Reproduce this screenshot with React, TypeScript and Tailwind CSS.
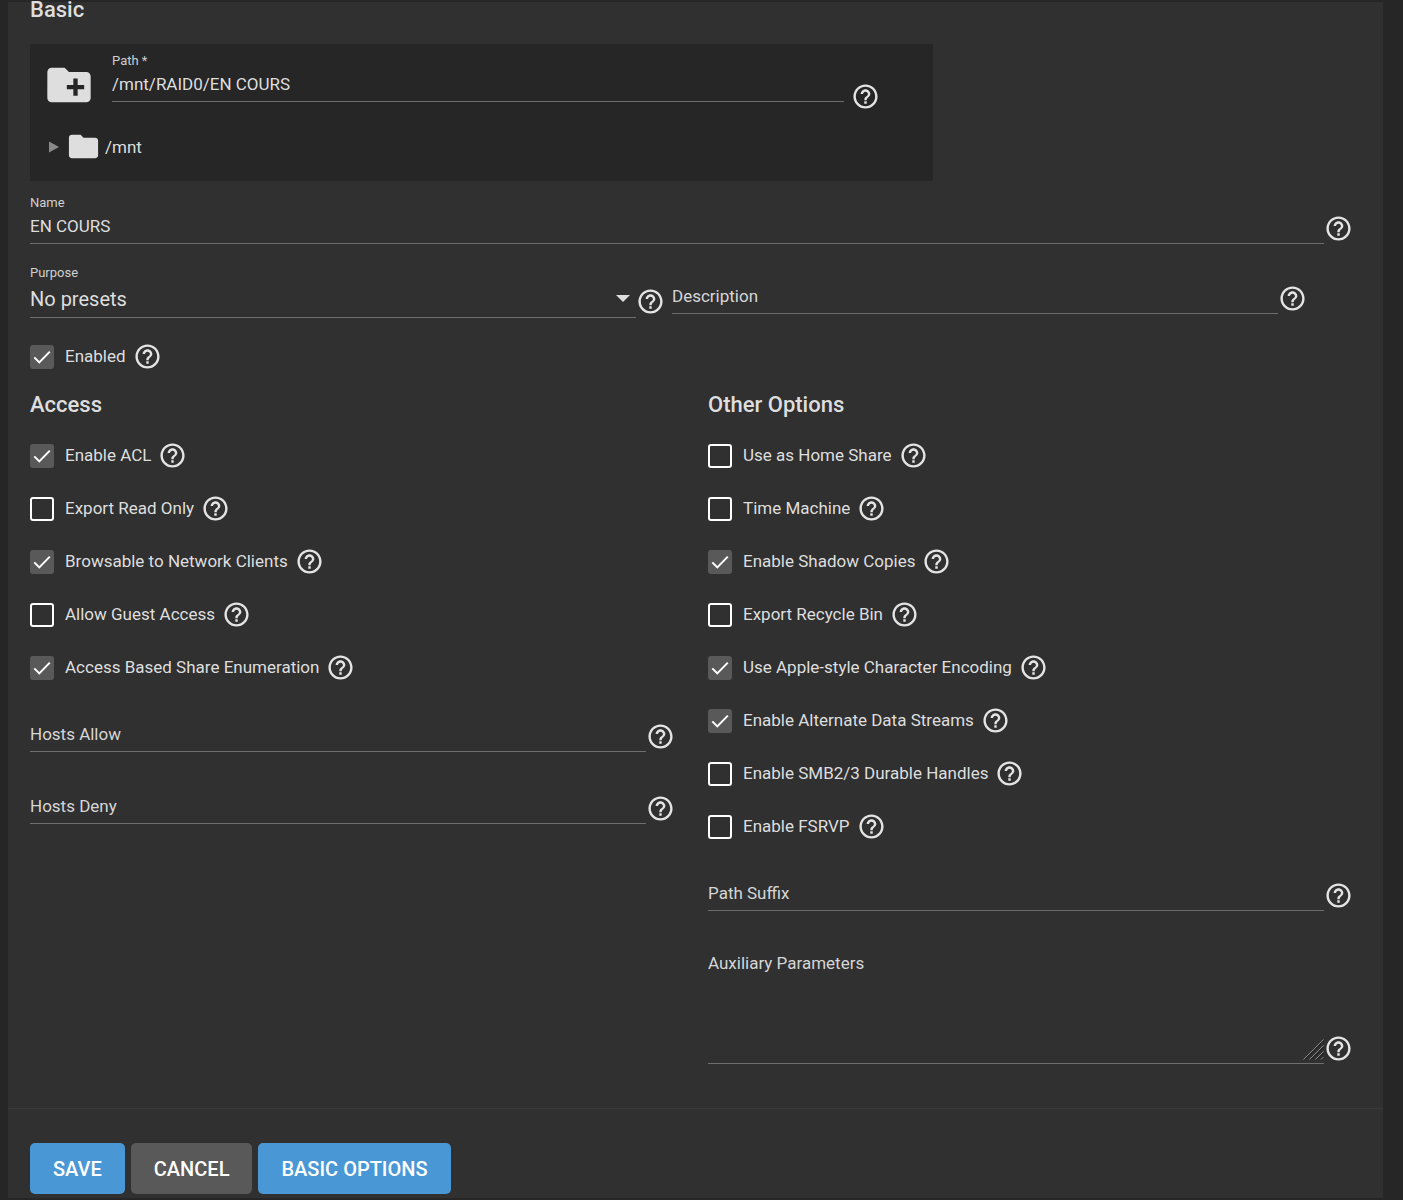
import { useState } from 'react'
import type { ReactNode } from 'react'
import { MdCreateNewFolder, MdFolder, MdHelpOutline } from 'react-icons/md'

const ACCESS = [
  { id: 'acl', label: 'Enable ACL', on: true },
  { id: 'ro', label: 'Export Read Only', on: false },
  { id: 'browsable', label: 'Browsable to Network Clients', on: true },
  { id: 'guestok', label: 'Allow Guest Access', on: false },
  { id: 'abe', label: 'Access Based Share Enumeration', on: true },
]

const OTHER = [
  { id: 'home', label: 'Use as Home Share', on: false },
  { id: 'timemachine', label: 'Time Machine', on: false },
  { id: 'shadowcopy', label: 'Enable Shadow Copies', on: true },
  { id: 'recyclebin', label: 'Export Recycle Bin', on: false },
  { id: 'aapl', label: 'Use Apple-style Character Encoding', on: true },
  { id: 'streams', label: 'Enable Alternate Data Streams', on: true },
  { id: 'durable', label: 'Enable SMB2/3 Durable Handles', on: false },
  { id: 'fsrvp', label: 'Enable FSRVP', on: false },
]

function Help({ className = '' }: { className?: string }) {
  return (
    <button type="button" aria-label="Help" className={`shrink-0 text-[#e4e4e4] ${className}`}>
      <MdHelpOutline className="size-[29px]" />
    </button>
  )
}

// Text box with a floating label: small and above when there is a value, resting on the line when empty.
function TextField({ id, label, initial = '' }: { id: string; label: string; initial?: string }) {
  const [value, setValue] = useState(initial)
  return (
    <div className="relative min-w-0 flex-1 pt-4">
      <label
        htmlFor={id}
        className={
          value
            ? 'absolute left-0 top-0 text-[13px] leading-[18px] text-[#cfcfcf]'
            : 'absolute left-0 top-4 text-[17px] leading-8 text-[#d6d6d6]'
        }
      >
        {label}
      </label>
      <input
        id={id}
        type="text"
        value={value}
        onChange={(e) => setValue(e.target.value)}
        className="block h-[34px] w-full border-b border-[#6e6e6e] bg-transparent pb-0.5 text-[17px] outline-none"
      />
    </div>
  )
}

function Check({ id, label, on }: { id: string; label: string; on: boolean }) {
  return (
    <div className="flex items-center">
      <span className="relative flex size-6 shrink-0">
        <input
          id={id}
          type="checkbox"
          defaultChecked={on}
          className="peer size-6 appearance-none rounded-[3px] border-2 border-white checked:border-0 checked:bg-[#595959]"
        />
        <svg
          viewBox="0 0 24 24"
          fill="none"
          stroke="#fff"
          strokeWidth="2"
          className="pointer-events-none absolute inset-0 hidden peer-checked:block"
        >
          <path d="M4.3 12.4 9.3 17.4 19.8 6.6" />
        </svg>
      </span>
      <label htmlFor={id} className="ml-[11px] mr-[7px] pb-0.5 text-[17px] leading-6">
        {label}
      </label>
      <Help />
    </div>
  )
}

function Heading({ children }: { children: ReactNode }) {
  return <h2 className="mb-[22px] text-[22px] font-medium leading-7">{children}</h2>
}

export default function App() {
  return (
    <div className="min-h-screen bg-[#262626] py-0.5 pl-2 pr-5 font-['Roboto',sans-serif] text-[#dedede]">
      <form className="bg-[#303030] pb-1" onSubmit={(e) => e.preventDefault()}>
        <div className="pb-11 pl-[22px] pr-[30px]">
          <h2 className="text-[22px] font-medium leading-4">Basic</h2>

          <div className="mt-[26px] max-w-[903px] bg-[#262626] pb-[17px] pt-2">
            <div className="flex items-end pl-[13px] pr-[53px]">
              <button type="button" aria-label="Create folder" className="mr-[17px] shrink-0">
                <MdCreateNewFolder className="size-[52px]" />
              </button>
              <div className="flex min-w-0 flex-1 pb-[9px]">
                <TextField id="path" label="Path *" initial="/mnt/RAID0/EN COURS" />
              </div>
              <Help className="ml-[7px]" />
            </div>
            <div className="mt-[18px] flex items-center pl-[19px]">
              <button type="button" aria-label="Expand" className="mr-[7px]">
                <svg viewBox="0 0 10 12" className="h-3 w-2.5" fill="#8a8a8a">
                  <path d="M0 0.5 10 6 0 11.5z" />
                </svg>
              </button>
              <MdFolder className="size-[35px]" />
              <span className="ml-1 text-[17px] leading-6">/mnt</span>
            </div>
          </div>

          <div className="mt-[13px] flex items-end">
            <TextField id="name" label="Name" initial="EN COURS" />
            <Help className="mb-px" />
          </div>

          <div className="mt-5 grid grid-cols-2 items-start gap-[7px] pr-[46px]">
            <div className="flex items-end">
              <div className="relative min-w-0 flex-1 pt-4">
                <label htmlFor="purpose" className="absolute left-0 top-0 text-[13px] leading-[18px] text-[#cfcfcf]">
                  Purpose
                </label>
                <select
                  id="purpose"
                  className="block h-[38px] w-full appearance-none border-b border-[#6e6e6e] bg-transparent text-xl outline-none"
                >
                  <option>No presets</option>
                </select>
                <svg
                  viewBox="0 0 14 7"
                  fill="currentColor"
                  className="pointer-events-none absolute bottom-4 right-1.5 h-[7px] w-3.5"
                >
                  <path d="M0 0h14L7 7z" />
                </svg>
              </div>
              <Help className="mb-0.5" />
            </div>
            <div className="flex items-end">
              <TextField id="description" label="Description" />
              <Help className="mb-px" />
            </div>
          </div>

          <div className="mt-6">
            <Check id="enabled" label="Enabled" on />
          </div>

          <div className="mt-5 grid grid-cols-2 gap-x-[33px]">
            <section>
              <Heading>Access</Heading>
              <div className="flex flex-col gap-6">
                {ACCESS.map((o) => (
                  <Check key={o.id} {...o} />
                ))}
              </div>
              <div className="mt-5 flex items-end">
                <TextField id="hostsallow" label="Hosts Allow" />
                <Help className="mb-px" />
              </div>
              <div className="mt-[22px] flex items-end">
                <TextField id="hostsdeny" label="Hosts Deny" />
                <Help className="mb-px" />
              </div>
            </section>

            <section>
              <Heading>Other Options</Heading>
              <div className="flex flex-col gap-6">
                {OTHER.map((o) => (
                  <Check key={o.id} {...o} />
                ))}
              </div>
              <div className="mt-5 flex items-end">
                <TextField id="suffix" label="Path Suffix" />
                <Help className="mb-px" />
              </div>
              <div className="mt-9 flex items-end">
                <div className="relative min-w-0 flex-1">
                  <label htmlFor="aux" className="absolute left-0 top-0 text-[17px] leading-8 text-[#d6d6d6]">
                    Auxiliary Parameters
                  </label>
                  <textarea
                    id="aux"
                    className="block h-[117px] w-full resize-none border-b border-[#6e6e6e] bg-transparent pt-8 text-[17px] outline-none"
                  />
                  <svg
                    viewBox="0 0 21 21"
                    fill="none"
                    className="pointer-events-none absolute bottom-1 right-0 size-[21px]"
                  >
                    <path d="M2 20.5 20.5 2M8 20.5 20.5 8M14 20.5 20.5 14M19 20.5 20.5 19" stroke="#1c1c1c" />
                    <path d="M0.5 20.5 20.5 0.5M6.5 20.5 20.5 6.5M12.5 20.5 20.5 12.5M18 20.5 20.5 18" stroke="#8c8c8c" />
                  </svg>
                </div>
                <Help className="mb-px" />
              </div>
            </section>
          </div>
        </div>

        <div className="flex gap-1.5 border-t border-[#393939] pl-[22px] pt-[34px] text-xl font-medium text-white">
          <button type="submit" className="h-[51px] rounded-[5px] bg-[#4a97d6] px-[23px]">
            SAVE
          </button>
          <button type="button" className="h-[51px] rounded-[5px] bg-[#595959] px-[23px]">
            CANCEL
          </button>
          <button type="button" className="h-[51px] rounded-[5px] bg-[#4a97d6] px-[23px]">
            BASIC OPTIONS
          </button>
        </div>
      </form>
    </div>
  )
}
